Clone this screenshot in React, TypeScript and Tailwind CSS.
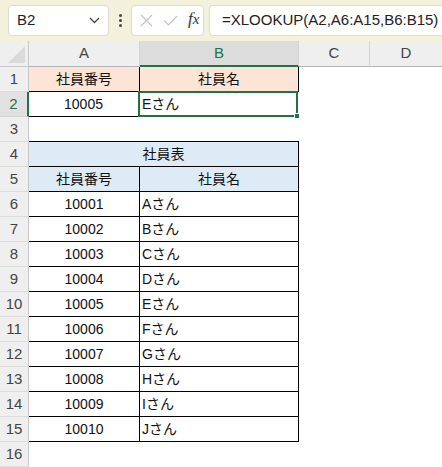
import React from 'react';

const FONT = { fontFamily: '"Liberation Sans", "Noto Sans CJK JP", sans-serif' };

const employees = [
  ['10001', 'Aさん'],
  ['10002', 'Bさん'],
  ['10003', 'Cさん'],
  ['10004', 'Dさん'],
  ['10005', 'Eさん'],
  ['10006', 'Fさん'],
  ['10007', 'Gさん'],
  ['10008', 'Hさん'],
  ['10009', 'Iさん'],
  ['10010', 'Jさん'],
];

function RowHead({ n, selected }: { n: number; selected?: boolean }) {
  return (
    <div
      className={`w-[29px] h-full shrink-0 flex items-center justify-center border-b border-r text-[15px] ${
        selected
          ? 'bg-[#e1e1e1] text-[#217346] border-b-[#d4d4d4] border-r-2 border-r-[#217346]'
          : 'bg-[#efefef] text-[#444] border-b-[#dcdcdc] border-r-[#c8c8c8]'
      }`}
    >
      {n}
    </div>
  );
}

function FormulaBar() {
  return (
    <div className="h-[41px] bg-[#f3f0db] flex items-center pl-2 gap-0 shrink-0">
      <div className="w-[101px] h-[31px] bg-white rounded border border-[#dedbd0] flex items-center justify-between pl-2 pr-2">
        <span className="text-[15px] text-[#222]">B2</span>
        <svg width="11" height="7" viewBox="0 0 11 7">
          <path d="M1 1l4.5 4.5L10 1" fill="none" stroke="#444" strokeWidth="1.3" />
        </svg>
      </div>
      <div className="w-[22px] flex flex-col items-center gap-[2px]">
        <span className="w-[3px] h-[3px] bg-[#444] rounded-full" />
        <span className="w-[3px] h-[3px] bg-[#444] rounded-full" />
        <span className="w-[3px] h-[3px] bg-[#444] rounded-full" />
      </div>
      <div className="w-[73px] h-[31px] bg-white rounded border border-[#dedbd0] flex items-center pl-[8px] gap-[10px]">
        <svg width="13" height="13" viewBox="0 0 13 13">
          <path d="M1 1l11 11M12 1L1 12" stroke="#c4c4c4" strokeWidth="1.2" />
        </svg>
        <svg width="15" height="11" viewBox="0 0 15 11">
          <path d="M1 5.5l4.5 4.5L14 1" fill="none" stroke="#c4c4c4" strokeWidth="1.2" />
        </svg>
        <span className="italic text-[17px] text-[#333] -mt-[3px]" style={{ fontFamily: '"Liberation Serif", serif' }}>
          f<span className="text-[15px]">x</span>
        </span>
      </div>
      <div className="ml-[5px] flex-1 h-[31px] bg-white rounded-l border border-r-0 border-[#dedbd0] flex items-center pl-3 text-[15px] text-[#222] whitespace-nowrap overflow-hidden">
        =XLOOKUP(A2,A6:A15,B6:B15)
      </div>
    </div>
  );
}

function ColumnHeader() {
  return (
    <div className="h-[26px] flex shrink-0 text-[15px] text-[#444]">
      <div className="w-[29px] h-full bg-[#efefef] border-r border-b border-[#c8c8c8] relative overflow-hidden">
        <div className="absolute right-[3px] bottom-[3px] w-0 h-0 border-l-[17px] border-l-transparent border-b-[17px] border-b-[#dadada]" />
      </div>
      <div className="w-[111px] h-full bg-[#efefef] border-r border-r-[#d4d4d4] border-b border-b-[#b5b5b5] flex items-center justify-center">A</div>
      <div className="w-[159px] h-full bg-[#dcdcdc] border-r border-r-[#d4d4d4] border-b-2 border-b-[#217346] text-[#217346] flex items-center justify-center">B</div>
      <div className="w-[71px] h-full bg-[#efefef] border-r border-r-[#d4d4d4] border-b border-b-[#b5b5b5] flex items-center justify-center">C</div>
      <div className="flex-1 h-full bg-[#efefef] border-b border-b-[#b5b5b5] flex items-center justify-center">D</div>
    </div>
  );
}

export default function App() {
  return (
    <div className="w-[442px] h-[467px] bg-white overflow-hidden flex flex-col text-[#111]" style={FONT}>
      <FormulaBar />
      <ColumnHeader />

      {/* row 1 */}
      <div className="h-[25px] flex shrink-0 text-[14px]">
        <RowHead n={1} />
        <div className="w-[111px] bg-[#fce4d6] border-r border-b border-black flex items-center justify-center">社員番号</div>
        <div className="w-[159px] bg-[#fce4d6] border-r border-b border-black flex items-center justify-center">社員名</div>
      </div>

      {/* row 2 */}
      <div className="h-[25px] flex shrink-0 text-[14px]">
        <RowHead n={2} selected />
        <div className="w-[110px] border-r border-b border-black flex items-center justify-center">10005</div>
        <div className="relative w-[160px] -ml-px -mt-px h-[26px] border-2 border-[#217346] flex items-center pl-[2px]">
          Eさん
          <div className="absolute -right-[4px] -bottom-[4px] w-[6px] h-[6px] bg-[#217346] border border-white" />
        </div>
      </div>

      {/* row 3 */}
      <div className="h-[25px] flex shrink-0 text-[14px]">
        <RowHead n={3} />
      </div>

      {/* row 4 */}
      <div className="h-[25px] flex shrink-0 text-[14px]">
        <RowHead n={4} />
        <div className="w-[270px] bg-[#ddebf7] border-t border-r border-b border-black -mt-px h-[26px] flex items-center justify-center">社員表</div>
      </div>

      {/* row 5 */}
      <div className="h-[25px] flex shrink-0 text-[14px]">
        <RowHead n={5} />
        <div className="w-[111px] bg-[#ddebf7] border-r border-b border-black flex items-center justify-center">社員番号</div>
        <div className="w-[159px] bg-[#ddebf7] border-r border-b border-black flex items-center justify-center">社員名</div>
      </div>

      {employees.map(([id, name], i) => (
        <div key={id} className="h-[25px] flex shrink-0 text-[14px]">
          <RowHead n={i + 6} />
          <div className="w-[111px] border-r border-b border-black flex items-center justify-center">{id}</div>
          <div className="w-[159px] border-r border-b border-black flex items-center pl-[2px]">{name}</div>
        </div>
      ))}

      <div className="h-[25px] flex shrink-0 text-[14px]">
        <RowHead n={16} />
      </div>
    </div>
  );
}
